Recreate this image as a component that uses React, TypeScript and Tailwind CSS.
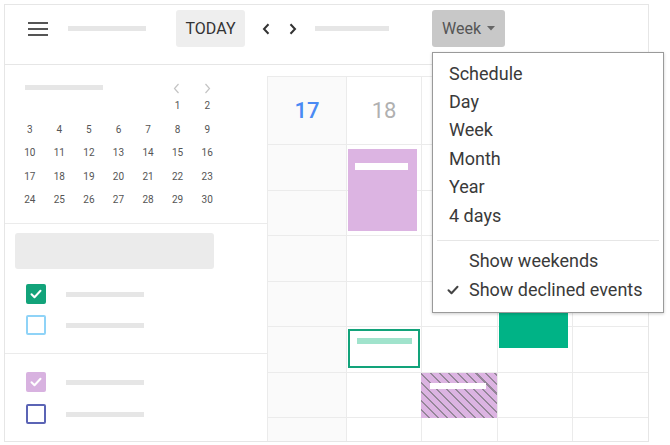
import React from 'react'

const days: (number | null)[] = [null, null, null, null, null, 1, 2]
for (let d = 3; d <= 30; d++) days.push(d)

const menuItems = ['Schedule', 'Day', 'Week', 'Month', 'Year', '4 days']

function Bar({ className = '' }: { className?: string }) {
  return <div className={`h-[5px] bg-[#e6e6e6] ${className}`} />
}

function Check({ color = 'white' }: { color?: string }) {
  return (
    <svg width="14" height="14" viewBox="0 0 14 14" fill="none">
      <path d="M2.5 7.2l3 3 6-6.4" stroke={color} strokeWidth="2" strokeLinecap="round" strokeLinejoin="round" />
    </svg>
  )
}

function CalendarRow({ box, filled }: { box: string; filled?: boolean }) {
  return (
    <div className="flex items-center">
      <div
        className={`ml-[21px] flex h-[20px] w-[20px] items-center justify-center rounded-[2px] ${box}`}
      >
        {filled && <Check />}
      </div>
      <Bar className="ml-[20px] w-[78px]" />
    </div>
  )
}

function MiniCalendar() {
  return (
    <div className="h-[159px] shrink-0 border-b border-[#ebebeb]">
      <div className="flex h-[30px] items-end">
        <Bar className="mb-[5px] ml-[20px] w-[78px]" />
        <div className="mb-[1px] ml-[70px] flex gap-[24px] text-[#c4c4c4]">
          <svg width="7" height="11" viewBox="0 0 7 11" fill="none">
            <path d="M5.5 1L1.5 5.5l4 4.5" stroke="currentColor" strokeWidth="1.2" />
          </svg>
          <svg width="7" height="11" viewBox="0 0 7 11" fill="none">
            <path d="M1.5 1l4 4.5-4 4.5" stroke="currentColor" strokeWidth="1.2" />
          </svg>
        </div>
      </div>
      <div className="ml-[10px] mt-[-1px] grid w-[207px] grid-cols-7">
        {days.map((d, i) => (
          <div key={i} className="flex h-[23.5px] items-center justify-center text-[10px] text-[#555]">
            {d ?? ''}
          </div>
        ))}
      </div>
    </div>
  )
}

function Sidebar() {
  return (
    <div className="flex w-[262px] shrink-0 flex-col">
      <MiniCalendar />
      <div className="h-[130px] shrink-0 border-b border-[#ebebeb]">
        <div className="ml-[10px] mt-[9px] h-[36px] w-[199px] rounded-[3px] bg-[#ebebeb]" />
        <div className="mt-[15px] flex flex-col gap-[11px]">
          <CalendarRow box="bg-[#12a37a] border-2 border-[#12a37a]" filled />
          <CalendarRow box="border-2 border-[#8fd3f7]" />
        </div>
      </div>
      <div className="mt-[18px] flex flex-col gap-[12px]">
        <CalendarRow box="bg-[#d8b2e0]" filled />
        <CalendarRow box="border-2 border-[#5b64b5]" />
      </div>
    </div>
  )
}

const colWidths = ['w-[79px] bg-[#fafafa]', 'w-[75px]', 'w-[76px]', 'w-[75px]', 'w-[76px]']

function WeekGrid() {
  return (
    <div className="relative mt-[11px] flex flex-1 border-l border-t border-[#ebebeb]">
      {colWidths.map((w, c) => (
        <div key={c} className={`flex flex-col border-r border-[#ebebeb] ${w}`}>
          <div className="flex h-[68px] shrink-0 items-center justify-center border-b border-[#ebebeb]">
            {c === 0 && <span className="text-[22px] font-medium text-[#4a8af4]">17</span>}
            {c === 1 && <span className="text-[22px] text-[#b0b0b0]">18</span>}
          </div>
          {[0, 1, 2, 3, 4, 5, 6].map((r) => (
            <div key={r} className="h-[45.5px] shrink-0 border-b border-[#ebebeb]" />
          ))}
        </div>
      ))}

      {/* events */}
      <div className="absolute left-[80px] top-[72px] h-[82px] w-[69px] bg-[#dcb4e2]">
        <div className="ml-[7px] mt-[14px] h-[7px] w-[53px] bg-white" />
      </div>
      <div className="absolute left-[80px] top-[252px] h-[39px] w-[72px] border-2 border-[#12a37a] bg-white">
        <div className="ml-[7px] mt-[7px] h-[6px] w-[55px] bg-[#a0e3cc]" />
      </div>
      <div className="absolute left-[231px] top-[220px] h-[51px] w-[69px] bg-[#00b386]" />
      <div className="absolute left-[153px] top-[296px] h-[45px] w-[76px] bg-[repeating-linear-gradient(45deg,#dcb4e2_0px,#dcb4e2_5px,#948698_5px,#948698_6.5px)]">
        <div className="ml-[9px] mt-[10px] h-[6px] w-[56px] bg-white" />
      </div>
    </div>
  )
}

function Header() {
  return (
    <div className="flex h-[60px] shrink-0 items-start border-b border-[#e6e6e6] pt-[5px]">
      <div className="ml-[23px] flex h-[37px] flex-col justify-center gap-[4px]">
        <div className="h-[2px] w-[20px] bg-[#555]" />
        <div className="h-[2px] w-[20px] bg-[#555]" />
        <div className="h-[2px] w-[20px] bg-[#555]" />
      </div>
      <div className="ml-[20px] flex h-[37px] items-center">
        <Bar className="w-[78px]" />
      </div>
      <div className="ml-[30px] flex h-[37px] w-[69px] items-center justify-center rounded-[3px] bg-[#eeeeee] text-[16px] text-[#333]">
        TODAY
      </div>
      <div className="ml-[17px] flex h-[37px] items-center gap-[19px] text-[#333]">
        <svg width="8" height="12" viewBox="0 0 8 12" fill="none">
          <path d="M6.5 1.2L2 6l4.5 4.8" stroke="currentColor" strokeWidth="2" />
        </svg>
        <svg width="8" height="12" viewBox="0 0 8 12" fill="none">
          <path d="M1.5 1.2L6 6l-4.5 4.8" stroke="currentColor" strokeWidth="2" />
        </svg>
      </div>
      <div className="ml-[18px] flex h-[37px] items-center">
        <Bar className="w-[74px]" />
      </div>
      <div className="ml-[43px] flex h-[37px] w-[73px] items-center justify-center gap-[6px] rounded-[3px] bg-[#c8c8c8] text-[16px] text-[#555]">
        Week
        <svg width="8" height="5" viewBox="0 0 8 5">
          <path d="M0 0h8L4 4.5z" fill="#666" />
        </svg>
      </div>
    </div>
  )
}

function Menu() {
  return (
    <div className="absolute left-[432px] top-[52px] w-[232px] border border-[#9a9a9a] bg-white pb-[8px] pt-[6px] text-[18px] text-[#3a3a3a] shadow-[0_1px_3px_rgba(0,0,0,0.2)]">
      {menuItems.map((m) => (
        <div key={m} className="flex h-[28.4px] items-center pl-[16px]">
          {m}
        </div>
      ))}
      <div className="mx-[4px] mb-[5px] mt-[11px] border-t border-[#e6e6e6]" />
      <div className="flex h-[29px] items-center pl-[36px]">Show weekends</div>
      <div className="flex h-[29px] items-center pl-[13px]">
        <span className="mr-[9px] flex w-[14px]">
          <Check color="#444" />
        </span>
        Show declined events
      </div>
    </div>
  )
}

export default function App() {
  return (
    <div className="relative h-[445px] w-[670px] overflow-hidden bg-white pl-[4px] pt-[4px] font-[Roboto,sans-serif]">
      <div className="flex h-[438px] w-[645px] flex-col border border-[#e6e6e6]">
        <Header />
        <div className="flex min-h-0 flex-1 overflow-hidden">
          <Sidebar />
          <WeekGrid />
        </div>
      </div>
      <Menu />
    </div>
  )
}
